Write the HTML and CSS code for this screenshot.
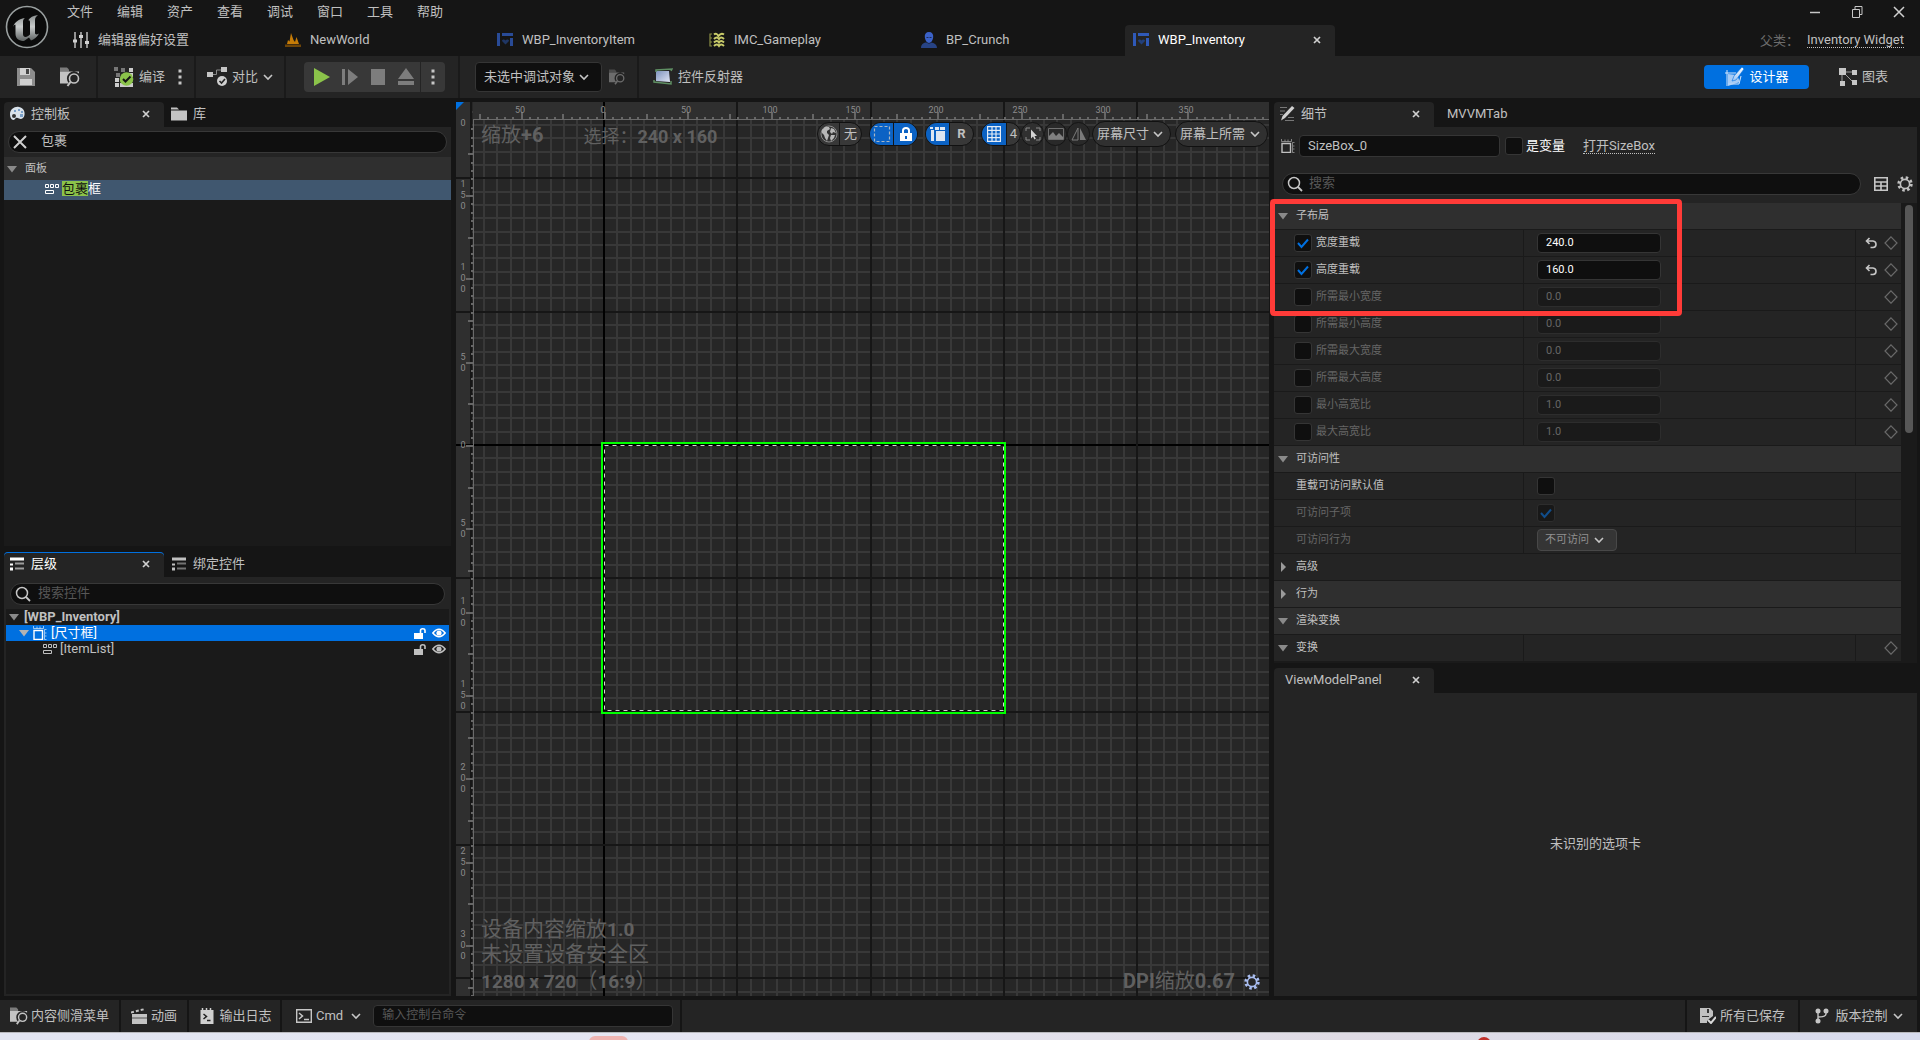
FILE: index.html
```html
<!DOCTYPE html>
<html lang="zh-CN">
<head>
<meta charset="utf-8">
<title>WBP_Inventory</title>
<link rel="stylesheet" href="styles.css">
</head>
<body>
<svg class="defs" aria-hidden="true">
  <defs>
    <linearGradient id="metal" x1="0" y1="0" x2="0" y2="1"><stop offset="0" stop-color="#8b9090"/><stop offset=".45" stop-color="#c9cccc"/><stop offset="1" stop-color="#5c6161"/></linearGradient>
    <linearGradient id="screen" x1="0" y1="0" x2="1" y2="1"><stop offset="0" stop-color="#7f93bd"/><stop offset="1" stop-color="#dfe4f4"/></linearGradient>
    <linearGradient id="pen" x1="0" y1="0" x2="0" y2="1"><stop offset="0" stop-color="#fff"/><stop offset="1" stop-color="#9cc4f4"/></linearGradient>
  </defs>
  <symbol id="logo" viewBox="0 0 44 44"><circle cx="22" cy="22" r="20.5" fill="#0b0b0b" stroke="#9aa0a0" stroke-width="1.6"/><path fill="url(#metal)" d="M8 22c1-4 5-8 12-9-1.500 1-2 2-2 4v12c0 2 1 3 2.500 3s3-1 4.500-2.500V17c0-1.500-1-2-2-1.600 2-2.800 5-4.800 10-5.400-2 1.500-3 3-3 5v13c0 1.500 1.500 2 4 .5-2 3.500-5 6-8 7l-2-3-5 3.500c-5 0-8.500-2.500-8.500-7V20.500c0-1.500-1-1.500-2.500 1.500z"/></symbol>
  <symbol id="i-sliders" viewBox="0 0 16 16"><path stroke="#bdbdbd" stroke-width="1.500" d="M2 0v16M8 0v16M14 0v16"/><path fill="#d0d0d0" d="M0 7.500h4v3H0zM6 3h4v3H6zM12 9h4v3h-4z"/></symbol>
  <symbol id="i-level" viewBox="0 0 16 16"><path fill="#c67c07" d="M2 12l1-4 1.500 1.500L6 1l2.500 7 1.500 2 1.500-5L14 12z"/><path fill="#6e4508" d="M0 12.500h16V15H0z"/></symbol>
  <symbol id="i-widget" viewBox="0 0 16 16"><path fill="#2f59b8" d="M0 1h3v13H0zM5 1h11v3H5zM13 6h3v8h-3z"/><path fill="#223f7a" d="M8.500 12.500L5 9c0-1.800 2.500-2 3.500-.6C9.500 7 12 7.200 12 9z"/></symbol>
  <symbol id="i-input" viewBox="0 0 16 16"><path fill="none" stroke="#8c8f45" stroke-width="1.200" d="M3 2H1v12h2M1 6h2M1 10h2"/><path fill="none" stroke="#c9cc6a" stroke-width="2" d="M5 2.500q2.500-2 4.500 1.500Q12 .5 15 2.500M5 7q3-3 5 0 2-3 5 0M5 10.500q3-3 5 0 2-3 5 0M5 14q3-3 5 0 2-3 5 0"/></symbol>
  <symbol id="i-person" viewBox="0 0 16 16"><path fill="#3b62c8" d="M8 0c3 0 4.500 2 4.200 5C12 8 10 11 8 11S4 8 3.800 5C3.500 2 5 0 8 0z"/><path fill="#274384" d="M0 16c0-4 3-5.500 5.500-5.500Q8 12.500 10.500 10.500 16 11.500 16 16z"/><path fill="#1d2c58" d="M5.500 5h2v1h-2zM8.500 5h2v1h-2z"/></symbol>
  <symbol id="i-close" viewBox="0 0 8 8"><path stroke="#cfcfcf" stroke-width="1.700" d="M1 1l6 6M7 1L1 7"/></symbol>
  <symbol id="i-save" viewBox="0 0 18 18"><path fill="#8d8d8d" d="M0 0h14l4 4v14H0z"/><path fill="#d0d0d0" d="M3 0h10v7H3zM3 11h12v6H3z"/><path fill="#444" d="M9 1h3v5H9z"/></symbol>
  <symbol id="i-browse" viewBox="0 0 20 19"><path fill="#7c7c7c" d="M0 0h7l2 2v2H0z"/><path fill="#c3c3c3" d="M0 4h19v2A7 7 0 0 0 9 16H0z"/><circle cx="14" cy="11" r="4.500" fill="none" stroke="#c3c3c3" stroke-width="1.600"/><path stroke="#c3c3c3" stroke-width="2" d="M10.500 14.500L7.500 18.500"/></symbol>
  <symbol id="i-compile" viewBox="0 0 20 20"><path fill="#777" d="M0 0h4v4H0zM7 1h4v4H7zM2 6h4v4H2z"/><path fill="#ccc" d="M15 1h4v4h-4zM1 11h4v4H1zM1 16h4v4H1zM6 16h13v4H6zM15 6h4v4h-4z"/><circle cx="12.500" cy="12" r="6.800" fill="#8bc34a"/><path fill="none" stroke="#151515" stroke-width="2" d="M9 12l2.500 2.500 5-5"/></symbol>
  <symbol id="i-diff" viewBox="0 0 20 20"><path fill="none" stroke="#8a8a8a" d="M5 7.500h4.500V3H14"/><path fill="#c6c6c6" d="M0 5h6v5H0zM14 0h6v5h-6z"/><circle cx="15" cy="14" r="5" fill="#d0d0d0"/><path fill="none" stroke="#222" stroke-width="1.600" d="M12.500 14l2 2 3.500-4"/></symbol>
  <symbol id="i-chev" viewBox="0 0 10 10"><path fill="none" stroke="#c6c6c6" stroke-width="1.600" d="M1 3l4 4 4-4"/></symbol>
  <symbol id="i-kebab" viewBox="0 0 4 16"><path fill="#c6c6c6" d="M.5.5h3v3h-3zM.5 6.500h3v3h-3zM.5 12.500h3v3h-3z"/></symbol>
  <symbol id="i-play" viewBox="0 0 16 18"><path fill="#8bc34a" d="M0 0l16 9-16 9z"/></symbol>
  <symbol id="i-step" viewBox="0 0 16 18"><path fill="#7d7d7d" d="M0 1h3v16H0zM6 1l10 8-10 8z"/></symbol>
  <symbol id="i-stop" viewBox="0 0 16 18"><path fill="#7d7d7d" d="M1 1h14v16H1z"/></symbol>
  <symbol id="i-eject" viewBox="0 0 16 18"><path fill="#7d7d7d" d="M8 0l8 11H0zM0 13h16v4H0z"/></symbol>
  <symbol id="i-reflect" viewBox="0 0 20 18"><path fill="url(#screen)" d="M3 3h13l1 11-14-1z"/><path fill="none" stroke="#5f8f63" stroke-width="1.500" d="M3 4V2l16-1-1 2M1 12v2l17 2v-3"/></symbol>
  <symbol id="i-design" viewBox="0 0 20 20"><path fill="none" stroke="#d5e6fb" d="M1 6h11M3 3v16M17 9l-2 8H4"/><path fill="#b9d5f7" d="M4 7l9 1 3 7-12 4z" opacity=".9"/><path fill="url(#pen)" stroke="#0070e0" stroke-width=".6" d="M18 0l2 2-8 11-4 1 2-5z"/></symbol>
  <symbol id="i-graph" viewBox="0 0 18 18"><path fill="none" stroke="#9a9a9a" d="M3 4v12M5 4h10M5 5l10 10"/><path fill="#c6c6c6" d="M0 0h7v7H0zM13 2h5v5h-5zM1 13h5v5H1zM13 12h5v5h-5z"/></symbol>
  <symbol id="i-palette" viewBox="0 0 16 16"><path fill="#d9e2ea" d="M1 8C1 3 6 0 10 1c5 1 6 5 5.500 8-.5 4-4 4.500-5.500 3.500-2-1-3-1-4 .5-2 2.500-5 0-5-5z"/><circle cx="5" cy="10" r="2" fill="#333"/><path fill="#7aa0c8" d="M5 4h2v2H5zM9 3h2v2H9zM12 5h2v2h-2zM11 8h3v3h-3z"/></symbol>
  <symbol id="i-folder" viewBox="0 0 16 13"><path fill="#c3c3c3" d="M0 0h6l2 2H0zM0 3h16v10H0z"/></symbol>
  <symbol id="i-x" viewBox="0 0 14 14"><path stroke="#d0d0d0" stroke-width="2" d="M1 1l12 12M13 1L1 13"/></symbol>
  <symbol id="i-search" viewBox="0 0 16 16"><circle cx="7" cy="7" r="5.500" fill="none" stroke="#c6c6c6" stroke-width="1.500"/><path stroke="#c6c6c6" stroke-width="1.800" d="M11 11l4 4"/></symbol>
  <symbol id="i-down" viewBox="0 0 10 10"><path fill="#8a8a8a" d="M0 2h10L5 8.500z"/></symbol>
  <symbol id="i-right" viewBox="0 0 10 10"><path fill="#9a9a9a" d="M3 0l5 5-5 5z"/></symbol>
  <symbol id="i-wrap" viewBox="0 0 14 10"><path fill="none" stroke="currentColor" d="M.5.5h3v3h-3zM5.500.5h3v3h-3zM10.500.5h3v3h-3zM.5 6.500h8v3h-8z"/></symbol>
  <symbol id="i-size" viewBox="0 0 14 14"><path fill="none" stroke="currentColor" stroke-width="1.400" d="M1 4.500h8.500v9H1z"/><path fill="none" stroke="currentColor" opacity=".6" d="M.5 0v2.500h10V0M4 .5v2M7 .5v2M13.500 3.500h-2v10h2M12 7h1.500M12 10h1.500"/></symbol>
  <symbol id="i-list" viewBox="0 0 14 13"><path fill="currentColor" d="M0 0h14v3H0zM0 6h3v2H0zM0 10h3v3H0z"/><path fill="currentColor" opacity=".55" d="M5 5h9v2H5zM5 10h9v2H5z"/></symbol>
  <symbol id="i-unlock" viewBox="0 0 12 11"><path fill="currentColor" d="M0 5h9v6H0z"/><path fill="none" stroke="currentColor" stroke-width="1.600" d="M6.500 5V2.500Q6.500.8 8.700.8T11 2.500V5"/></symbol>
  <symbol id="i-eye" viewBox="0 0 14 10"><path fill="none" stroke="currentColor" stroke-width="1.400" d="M.8 5Q7-2.500 13.200 5 7 12.500.8 5z"/><circle cx="7" cy="5" r="2.600" fill="currentColor"/></symbol>
  <symbol id="i-pencil" viewBox="0 0 16 16"><path stroke="#777" stroke-width="1.200" d="M1 1.500h7M1 5h5M1 8.500h3M9 11.500h6M6 14.500h9"/><path fill="#d0d0d0" d="M13 0l2.500 2L6 12l-4 2.500L3.500 10z"/></symbol>
  <symbol id="i-grid" viewBox="0 0 14 14"><path fill="none" stroke="#c6c6c6" stroke-width="1.600" d="M.8.8h12.400v12.400H.8zM.8 5h12.400M.8 9h12.400M7 5v8"/></symbol>
  <symbol id="i-gear" viewBox="0 0 16 16"><circle cx="8" cy="8" r="6.200" fill="none" stroke="currentColor" stroke-width="3" stroke-dasharray="2.430 2.430"/><circle cx="8" cy="8" r="4.600" fill="none" stroke="currentColor" stroke-width="1.600"/></symbol>
  <symbol id="i-undo" viewBox="0 0 12 12"><path fill="none" stroke="#c6c6c6" stroke-width="1.600" d="M4.500 1L1.500 4l3 3M1.500 4H8q3 .3 3 3.300T8 10.500H5.500"/></symbol>
  <symbol id="i-diamond" viewBox="0 0 14 14"><path fill="none" stroke="#6a6a6a" stroke-width="1.200" d="M7 .8L13 7l-6 6.200L1 7z"/></symbol>
  <symbol id="i-globe" viewBox="0 0 18 18"><circle cx="9" cy="9" r="8" fill="#333" stroke="#8a8a8a"/><path fill="#b8b8b8" d="M2 5l3-3 4 0 1 2-3 2 0 2 2 2-1 3-1 3-2-3-1-3-2-2zM11 3l3 1 2 4-3-1-1 2-2-2zM11 10l4 0-1 3-3 3-1-3z"/></symbol>
  <symbol id="i-dash" viewBox="0 0 18 18"><path fill="none" stroke="#a9b6c4" stroke-width="1.200" stroke-dasharray="3 2" d="M1.500 1.500h15v15h-15z"/></symbol>
  <symbol id="i-lock" viewBox="0 0 12 14"><path fill="#fff" d="M0 6h12v8H0z"/><path fill="none" stroke="#fff" stroke-width="2" d="M3 6V3.500q0-2.500 3-2.500t3 2.500V6"/><path fill="#0b62c4" d="M5 9h2v3H5z"/></symbol>
  <symbol id="i-layout" viewBox="0 0 16 14"><path fill="#dde6f2" d="M0 0h3v2H0zM1 3h3v11H1zM5 0h4v3H5zM10 0h5v3h-5zM6 4h9v10H6z"/></symbol>
  <symbol id="i-table" viewBox="0 0 14 16"><path fill="none" stroke="#e4ecf6" stroke-width="1.200" d="M.6.6h12.800v14.800H.6zM5 .6v15M9 .6v15M.6 4.300h13M.6 8h13M.6 11.700h13"/></symbol>
  <symbol id="i-pick" viewBox="0 0 16 16"><path fill="none" stroke="#8a8a8a" d="M1 5V2h4M11 2h4v3M15 11v3h-4M5 14H1v-3"/><path fill="#d4d4d4" d="M6 3.500v9l2-2 1.500 3 1.300-.7L9.500 10H12z"/></symbol>
  <symbol id="i-image" viewBox="0 0 16 14"><path fill="none" stroke="#6f6f6f" d="M.5 1.500h15v11H.5z"/><path fill="#808080" d="M1 12V9l4-4 3 4 3-3 4 4v2z"/></symbol>
  <symbol id="i-flip" viewBox="0 0 16 14"><path fill="none" stroke="#7a7a7a" d="M7 1v12H1z"/><path fill="#7a7a7a" d="M9 1v12h6z"/></symbol>
  <symbol id="i-clap" viewBox="0 0 16 16"><path fill="#c3c3c3" d="M1 6h15v10H1z"/><path fill="#8a8a8a" d="M1 9h15v2H1z"/><path stroke="#c3c3c3" stroke-width="2" stroke-dasharray="3 2" d="M0 4.500L14 1"/></symbol>
  <symbol id="i-log" viewBox="0 0 13 16"><path fill="#d0d0d0" d="M0 2h13v14H0z"/><path stroke="#d0d0d0" stroke-width="1.500" d="M2 0v3M6 0v3M10 0v3"/><path fill="none" stroke="#222" stroke-width="1.500" d="M3 6l3 2.500L3 11M6.500 12.500H10"/></symbol>
  <symbol id="i-cmd" viewBox="0 0 16 14"><path fill="none" stroke="#c6c6c6" stroke-width="1.400" d="M.7.7h14.600v12.600H.7z"/><path fill="none" stroke="#c6c6c6" stroke-width="1.500" d="M3 4l3.500 3L3 10M8 10.500h5"/></symbol>
  <symbol id="i-saved" viewBox="0 0 16 16"><path fill="#c0c0c0" d="M0 0h10l3 3v5L9 11l-2 2v2H0z"/><path fill="#333" d="M7 1h2v4H7zM2 8h7v1H2z"/><path fill="none" stroke="#d8d8d8" stroke-width="2" d="M8 12l3 3 5-6"/></symbol>
  <symbol id="i-branch" viewBox="0 0 14 16"><circle cx="3" cy="3" r="2.500" fill="#c6c6c6"/><circle cx="11" cy="3" r="2.500" fill="#c6c6c6"/><circle cx="3" cy="13" r="2.500" fill="#c6c6c6"/><path fill="none" stroke="#c6c6c6" stroke-width="1.400" d="M3 3v10M11 3v3q0 3-8 3"/></symbol>
</svg>

<div class="app">
  <header class="titlebar">
    <svg class="logo"><use href="#logo"/></svg>
    <div class="title-rows">
      <div class="menu-row">
        <nav class="menu"><button>文件</button><button>编辑</button><button>资产</button><button>查看</button><button>调试</button><button>窗口</button><button>工具</button><button>帮助</button></nav>
        <div class="window-controls">
          <button aria-label="最小化"><svg class="s12" viewBox="0 0 12 12"><path stroke="#c6c6c6" stroke-width="1.500" d="M1 6.500h10"/></svg></button>
          <button aria-label="还原"><svg class="s12" viewBox="0 0 12 12"><path fill="none" stroke="#c6c6c6" d="M1.500 3.500h7v8h-7zM4 3V.5h7v8H9"/></svg></button>
          <button aria-label="关闭"><svg class="s12" viewBox="0 0 12 12"><path stroke="#d0d0d0" stroke-width="1.500" d="M1 1l10 10M11 1L1 11"/></svg></button>
        </div>
      </div>
      <div class="doc-row">
        <div class="doc-tabs">
          <button class="doc-tab"><svg class="s16"><use href="#i-sliders"/></svg>编辑器偏好设置</button>
          <button class="doc-tab"><svg class="s16"><use href="#i-level"/></svg>NewWorld</button>
          <button class="doc-tab dim-icon"><svg class="s16"><use href="#i-widget"/></svg>WBP_InventoryItem</button>
          <button class="doc-tab"><svg class="s16"><use href="#i-input"/></svg>IMC_Gameplay</button>
          <button class="doc-tab"><svg class="s16"><use href="#i-person"/></svg>BP_Crunch</button>
          <button class="doc-tab active"><svg class="s16"><use href="#i-widget"/></svg>WBP_Inventory<svg class="tab-close"><use href="#i-close"/></svg></button>
        </div>
        <div class="parent-class"><span>父类<span class="mid-punct">：</span></span><a href="#">Inventory Widget</a></div>
      </div>
    </div>
  </header>

  <div class="toolbar">
    <div class="tb-group tb-file"><button aria-label="保存"><svg class="s18"><use href="#i-save"/></svg></button><button aria-label="浏览"><svg class="s20"><use href="#i-browse"/></svg></button></div>
    <div class="tb-group tb-compile"><button class="tb-text"><svg class="s20"><use href="#i-compile"/></svg>编译</button><button aria-label="编译选项"><svg class="kebab"><use href="#i-kebab"/></svg></button></div>
    <div class="tb-group tb-diff"><button class="tb-text"><svg class="s20"><use href="#i-diff"/></svg>对比<svg class="s10"><use href="#i-chev"/></svg></button></div>
    <div class="tb-group tb-play">
      <div class="play"><button aria-label="播放"><svg class="s18"><use href="#i-play"/></svg></button><button aria-label="步进"><svg class="s18"><use href="#i-step"/></svg></button><button aria-label="停止"><svg class="s18"><use href="#i-stop"/></svg></button><button aria-label="弹出"><svg class="s18"><use href="#i-eject"/></svg></button><button class="play-more" aria-label="播放选项"><svg class="kebab"><use href="#i-kebab"/></svg></button></div>
    </div>
    <div class="tb-group tb-debug"><span class="select debug-select"><select aria-label="调试对象"><option>未选中调试对象</option></select><svg class="s10"><use href="#i-chev"/></svg></span><button class="faded" aria-label="浏览调试对象"><svg class="s16"><use href="#i-browse"/></svg></button></div>
    <button class="tb-text tb-reflect"><svg class="s20"><use href="#i-reflect"/></svg>控件反射器</button>
    <div class="modes"><button class="mode active"><svg class="s20"><use href="#i-design"/></svg>设计器</button><button class="mode"><svg class="s18"><use href="#i-graph"/></svg>图表</button></div>
  </div>

  <main class="workspace">
    <div class="left-col">
      <section class="panel palette">
        <div class="tabs"><button class="tab active"><svg class="s16"><use href="#i-palette"/></svg>控制板<svg class="tab-close"><use href="#i-close"/></svg></button><button class="tab"><svg class="s16"><use href="#i-folder"/></svg>库</button></div>
        <div class="panel-body">
          <label class="search"><svg class="s14"><use href="#i-x"/></svg><input type="text" value="包裹" aria-label="搜索控制板"></label>
          <div class="category"><svg class="s10"><use href="#i-down"/></svg>面板</div>
          <div class="palette-item"><svg class="wrap-icon"><use href="#i-wrap"/></svg><span><mark>包裹</mark>框</span></div>
          <div class="list-space"></div>
        </div>
      </section>
      <section class="panel hierarchy">
        <div class="tabs"><button class="tab active focused"><svg class="s14"><use href="#i-list"/></svg>层级<svg class="tab-close"><use href="#i-close"/></svg></button><button class="tab"><svg class="s14"><use href="#i-list"/></svg>绑定控件</button></div>
        <div class="panel-body">
          <label class="search"><svg class="s16"><use href="#i-search"/></svg><input type="text" placeholder="搜索控件" aria-label="搜索控件"></label>
          <div class="tree">
            <div class="tree-row root"><svg class="s10"><use href="#i-down"/></svg>[WBP_Inventory]</div>
            <div class="tree-row level1 selected"><svg class="s10 pale"><use href="#i-down"/></svg><svg class="s14"><use href="#i-size"/></svg>[尺寸框]<span class="row-tools"><svg class="unlock"><use href="#i-unlock"/></svg><svg class="eye"><use href="#i-eye"/></svg></span></div>
            <div class="tree-row level2"><svg class="wrap-icon"><use href="#i-wrap"/></svg>[ItemList]<span class="row-tools"><svg class="unlock"><use href="#i-unlock"/></svg><svg class="eye"><use href="#i-eye"/></svg></span></div>
          </div>
        </div>
      </section>
    </div>

    <section class="designer" id="designer">
      <svg class="surface" id="surface"></svg>
      <div class="hud hud-top"><span>缩放<b>+6</b></span><span class="hud-size">选择<span class="mid-punct">：</span><b>240 x 160</b></span></div>
      <div class="view-tools">
        <div class="pill globe"><button aria-label="本地化"><svg class="s18"><use href="#i-globe"/></svg></button><button>无</button></div>
        <div class="pill locks"><button class="on" aria-label="轮廓"><svg class="s18"><use href="#i-dash"/></svg></button><button class="on" aria-label="锁定"><svg class="s14"><use href="#i-lock"/></svg></button></div>
        <div class="pill flow"><button class="on" aria-label="布局"><svg class="s16"><use href="#i-layout"/></svg></button><button class="bold">R</button></div>
        <div class="pill snap"><button class="on" aria-label="网格"><svg class="s16"><use href="#i-table"/></svg></button><button>4</button></div>
        <button class="round" aria-label="选取"><svg class="s16"><use href="#i-pick"/></svg></button>
        <button class="round off" aria-label="图像"><svg class="s16"><use href="#i-image"/></svg></button>
        <button class="round off" aria-label="翻转"><svg class="s16"><use href="#i-flip"/></svg></button>
        <span class="select pill-select"><select aria-label="屏幕尺寸"><option>屏幕尺寸</option></select><svg class="s10"><use href="#i-chev"/></svg></span>
        <span class="select pill-select wide"><select aria-label="填充"><option>屏幕上所需</option></select><svg class="s10"><use href="#i-chev"/></svg></span>
      </div>
      <div class="hud hud-bottom"><span>设备内容缩放<b>1.0</b></span><span>未设置设备安全区</span><span><b>1280 x 720</b><span class="mid-punct">（</span><b>16:9</b><span class="mid-punct">）</span></span></div>
      <div class="hud hud-dpi"><span><b class="light">DPI</b>缩放<b>0.67</b></span><button aria-label="DPI 设置"><svg class="s16"><use href="#i-gear"/></svg></button></div>
    </section>

    <div class="right-col">
      <section class="panel details">
        <div class="tabs"><button class="tab active"><svg class="s16"><use href="#i-pencil"/></svg>细节<svg class="tab-close"><use href="#i-close"/></svg></button><button class="tab">MVVMTab</button></div>
        <div class="panel-body">
          <div class="name-row"><svg class="s14"><use href="#i-size"/></svg><input class="field name-field" type="text" value="SizeBox_0" aria-label="名称"><label class="is-var"><input type="checkbox">是变量</label><a href="#">打开SizeBox</a></div>
          <div class="search-row"><label class="search"><svg class="s16"><use href="#i-search"/></svg><input type="text" placeholder="搜索" aria-label="搜索"></label><button aria-label="属性矩阵"><svg class="s14"><use href="#i-grid"/></svg></button><button aria-label="设置"><svg class="s16"><use href="#i-gear"/></svg></button></div>
          <div class="props-wrap">
            <div class="props">
              <div class="head"><svg class="s10"><use href="#i-down"/></svg>子布局</div>
              <div class="prop"><label class="cell"><input type="checkbox" checked>宽度重载</label><div class="cell val"><input class="field" type="text" value="240.0" aria-label="宽度重载"></div><div class="cell acts"><svg class="s12"><use href="#i-undo"/></svg><svg class="s14"><use href="#i-diamond"/></svg></div></div>
              <div class="prop"><label class="cell"><input type="checkbox" checked>高度重载</label><div class="cell val"><input class="field" type="text" value="160.0" aria-label="高度重载"></div><div class="cell acts"><svg class="s12"><use href="#i-undo"/></svg><svg class="s14"><use href="#i-diamond"/></svg></div></div>
              <div class="prop off"><label class="cell"><input type="checkbox">所需最小宽度</label><div class="cell val"><input class="field" type="text" value="0.0" disabled aria-label="所需最小宽度"></div><div class="cell acts"><svg class="s14"><use href="#i-diamond"/></svg></div></div>
              <div class="prop off"><label class="cell"><input type="checkbox">所需最小高度</label><div class="cell val"><input class="field" type="text" value="0.0" disabled aria-label="所需最小高度"></div><div class="cell acts"><svg class="s14"><use href="#i-diamond"/></svg></div></div>
              <div class="prop off"><label class="cell"><input type="checkbox">所需最大宽度</label><div class="cell val"><input class="field" type="text" value="0.0" disabled aria-label="所需最大宽度"></div><div class="cell acts"><svg class="s14"><use href="#i-diamond"/></svg></div></div>
              <div class="prop off"><label class="cell"><input type="checkbox">所需最大高度</label><div class="cell val"><input class="field" type="text" value="0.0" disabled aria-label="所需最大高度"></div><div class="cell acts"><svg class="s14"><use href="#i-diamond"/></svg></div></div>
              <div class="prop off"><label class="cell"><input type="checkbox">最小高宽比</label><div class="cell val"><input class="field" type="text" value="1.0" disabled aria-label="最小高宽比"></div><div class="cell acts"><svg class="s14"><use href="#i-diamond"/></svg></div></div>
              <div class="prop off"><label class="cell"><input type="checkbox">最大高宽比</label><div class="cell val"><input class="field" type="text" value="1.0" disabled aria-label="最大高宽比"></div><div class="cell acts"><svg class="s14"><use href="#i-diamond"/></svg></div></div>
              <div class="head"><svg class="s10"><use href="#i-down"/></svg>可访问性</div>
              <div class="prop"><label class="cell plain" for="acc-override">重载可访问默认值</label><div class="cell val"><input id="acc-override" type="checkbox"></div><div class="cell acts"></div></div>
              <div class="prop off"><label class="cell plain" for="acc-children">可访问子项</label><div class="cell val"><input id="acc-children" type="checkbox" checked disabled></div><div class="cell acts"></div></div>
              <div class="prop off"><label class="cell plain" for="acc-behavior">可访问行为</label><div class="cell val"><span class="select small-select"><select id="acc-behavior" disabled><option>不可访问</option></select><svg class="s10"><use href="#i-chev"/></svg></span></div><div class="cell acts"></div></div>
              <div class="head sub"><svg class="s10"><use href="#i-right"/></svg>高级</div>
              <div class="head"><svg class="s10"><use href="#i-right"/></svg>行为</div>
              <div class="head"><svg class="s10"><use href="#i-down"/></svg>渲染变换</div>
              <div class="prop"><div class="cell group"><svg class="s10"><use href="#i-down"/></svg>变换</div><div class="cell val"></div><div class="cell acts"><svg class="s14"><use href="#i-diamond"/></svg></div></div>
            </div>
            <div class="scrollbar"><div class="thumb"></div></div>
          </div>
        </div>
        <div class="callout"></div>
      </section>
      <section class="panel viewmodel">
        <div class="tabs"><button class="tab active text-only">ViewModelPanel<svg class="tab-close"><use href="#i-close"/></svg></button></div>
        <div class="panel-body empty">未识别的选项卡</div>
      </section>
    </div>
  </main>

  <footer class="status">
    <button class="st drawer"><svg class="s18"><use href="#i-browse"/></svg>内容侧滑菜单</button>
    <button class="st anim"><svg class="s16"><use href="#i-clap"/></svg>动画</button>
    <button class="st log"><svg class="s16"><use href="#i-log"/></svg>输出日志</button>
    <div class="st console"><button class="cmd"><svg class="s16"><use href="#i-cmd"/></svg>Cmd<svg class="s10"><use href="#i-chev"/></svg></button><input class="field" type="text" placeholder="输入控制台命令" aria-label="控制台命令"></div>
    <div class="st filler"></div>
    <button class="st saved"><svg class="s16"><use href="#i-saved"/></svg>所有已保存</button>
    <button class="st source"><svg class="s16"><use href="#i-branch"/></svg>版本控制<svg class="s10"><use href="#i-chev"/></svg></button>
  </footer>
  <div class="desktop"><div class="desk-pink"></div><div class="desk-dot"></div></div>
</div>
<script src="designer.js"></script>
</body>
</html>
```
FILE: styles.css
```css
* { box-sizing: border-box; }
body {
  margin: 0;
  background: #151515;
  color: #c0c0c0;
  font: 13px/16px Roboto, "Noto Sans CJK SC", sans-serif;
}
button, input, select { font: inherit; color: inherit; }
button { background: none; border: 0; padding: 0; display: flex; align-items: center; justify-content: center; white-space: nowrap; }
a { color: inherit; text-decoration: none; border-bottom: 1px dotted #c0c0c0; line-height: 15px; }
svg { flex: none; display: block; }
.defs { position: absolute; width: 0; height: 0; }
.s10 { width: 10px; height: 10px; }
.s12 { width: 12px; height: 12px; }
.s14 { width: 14px; height: 14px; }
.s16 { width: 16px; height: 16px; }
.s18 { width: 18px; height: 18px; }
.s20 { width: 20px; height: 20px; }
.kebab { width: 4px; height: 16px; }
/* full-width punctuation centred in its square */
.mid-punct { font-family: "Noto Sans CJK TC", sans-serif; }

.app { display: flex; flex-direction: column; min-height: 100vh; }

/* title bar */
.titlebar { display: flex; height: 56px; }
.logo { width: 44px; height: 44px; margin: 5px 6px 0 5px; }
.title-rows { flex: 1; }
.menu-row { display: flex; justify-content: space-between; height: 25px; }
.menu { display: flex; }
.menu button { padding: 0 12px; height: 23px; }
.window-controls { display: flex; gap: 30px; height: 24px; padding-right: 15px; }
.doc-row { display: flex; justify-content: space-between; height: 31px; padding-left: 10px; }
.doc-tabs { display: flex; gap: 2px; }
.doc-tab { width: 210px; padding: 0 14px 1px 8px; gap: 9px; justify-content: flex-start; border-radius: 4px 4px 0 0; }
.doc-tab.active { background: #242424; color: #fff; }
.doc-tab.dim-icon svg { opacity: .8; }
.tab-close { width: 8px; height: 8px; margin-left: auto; }
.parent-class { display: flex; align-items: center; gap: 8px; padding: 0 16px 1px 0; }
.parent-class span { color: #6c6c6c; }

/* main toolbar */
.toolbar { display: flex; height: 42px; background: #242424; }
.tb-group { display: flex; align-items: center; border-right: 2px solid #1a1a1a; }
.tb-text { gap: 5px; }
.tb-file { gap: 25px; padding: 0 16px 0 17px; }
.tb-compile { gap: 13px; padding: 0 12px 0 16px; }
.tb-diff { padding: 0 11px; }
.tb-play { padding: 0 13px 0 18px; }
.play { display: flex; padding-left: 4px; height: 30px; background: #383838; border-radius: 4px; }
.play button { width: 28px; }
.play .play-more { width: 25px; border-left: 1px solid #242424; }
.tb-debug { gap: 7px; padding: 0 12px 0 15px; }
.faded { opacity: .45; }
.tb-reflect { margin-left: 14px; }
.select { position: relative; display: inline-flex; align-items: center; }
.select select { appearance: none; width: 100%; height: 100%; border: 0; background: none; outline: none; opacity: 1; }
.select svg { position: absolute; right: 12px; pointer-events: none; }
.debug-select { width: 127px; height: 30px; background: #0f0f0f; border: 1px solid #353535; border-radius: 4px; }
.debug-select select { padding: 0 0 0 8px; }
.modes { display: flex; align-items: center; gap: 30px; margin-left: auto; padding-right: 32px; }
.mode { gap: 5px; height: 24px; }
.mode.active { width: 105px; background: #0070e0; color: #fff; border-radius: 4px; }

/* three columns */
.workspace { flex: 1; display: grid; grid-template-columns: 447fr 813fr 643fr; gap: 5px; padding: 4px 3px 4px 4px; }
.left-col, .right-col { display: flex; flex-direction: column; min-width: 0; }
.left-col { gap: 6px; }
.right-col { gap: 5px; }
.panel { display: flex; flex-direction: column; position: relative; }
.palette, .hierarchy { flex: 1; }
.viewmodel { flex: 1; }
.tabs { display: flex; height: 25px; }
.tab { gap: 6px; padding: 0 7px 2px; justify-content: flex-start; }
.tab.active { width: 160px; padding: 0 14px 2px 5px; background: #242424; border-radius: 4px 4px 0 0; }
.tab.active.text-only { padding-left: 11px; }
.tab.focused { color: #fff; box-shadow: inset 0 1px #0070e0; }
.details .tab + .tab { padding-left: 13px; }
.hierarchy .tab { gap: 7px; padding-left: 8px; }
.hierarchy .tab.active { padding-left: 6px; }
.panel-body { flex: 1; display: flex; flex-direction: column; background: #242424; }
.search { display: flex; align-items: center; height: 22px; padding: 0 8px 0 4px; background: #0f0f0f; border: 1px solid #383838; border-radius: 11px; }
.search input { flex: 1; min-width: 0; border: 0; padding: 0 0 2px; margin-left: 6px; background: none; outline: none; }
input::placeholder { color: #575757; opacity: 1; }
.palette .search { margin: 4px 4px; }
.palette .search input { margin-left: 14px; }
.category { display: flex; align-items: center; gap: 8px; height: 23px; padding-left: 3px; background: #2f2f2f; font-size: 11px; }
.palette-item { display: flex; align-items: center; gap: 3px; height: 20px; padding: 0 0 2px 41px; background: #40576f; color: #fff; }
.palette-item mark { background: #8bc34a; color: #0f0f0f; }
.wrap-icon { width: 14px; height: 10px; }
.list-space { flex: 1; background: #1a1a1a; }
.hierarchy .search { margin: 6px 6px 4px; }
.hierarchy .search input { margin-left: 7px; }
.tree { flex: 1; margin: 0 2px 2px; background: #1a1a1a; }
.tree-row { display: flex; align-items: center; height: 16px; padding-right: 3px; }
.tree-row.root { gap: 5px; padding-left: 3px; font-weight: 700; }
.tree-row.level1 { gap: 4px; padding-left: 13px; }
.tree-row.level2 { gap: 3px; padding-left: 37px; }
.tree-row.selected { background: #0070e0; color: #fff; }
.pale { filter: brightness(1.3); }
.row-tools { display: flex; align-items: center; gap: 6px; margin-left: auto; }
.unlock { width: 12px; height: 11px; }
.eye { width: 14px; height: 10px; }

/* designer canvas */
.designer { position: relative; overflow: hidden; background: #262626; }
.surface { position: absolute; inset: 0; width: 100%; height: 100%; }
.surface .label { fill: #8c8c8c; font-size: 9px; text-anchor: middle; }
.hud { position: absolute; color: #606060; font-size: 20px; line-height: 25px; }
.hud-top { top: 21px; left: 25px; display: flex; gap: 40px; }
.hud-size { font-size: 18px; }
.hud-bottom { left: 25px; bottom: 2px; display: flex; flex-direction: column; font-size: 21px; }
.hud-bottom b { font-size: 19px; }
.hud-dpi { right: 9px; bottom: 2px; display: flex; align-items: center; gap: 9px; }
.hud-dpi button { color: #a9bdf0; }
.view-tools { position: absolute; top: 20px; right: 1px; display: flex; align-items: center; height: 24px; }
.pill { display: flex; height: 24px; border: 1px solid #111; border-radius: 12px; background: #383838; overflow: hidden; }
.pill button { flex: 1; }
.pill button + button { border-left: 1px solid #151515; }
.pill .on { background: #0b62c4; }
.pill .bold { font-weight: 700; }
.globe { width: 45px; margin-right: 7px; }
.locks { width: 49px; margin-right: 7px; }
.flow { width: 49px; margin-right: 7px; }
.snap { width: 40px; }
.snap .on { flex: none; width: 24px; }
.round { width: 23px; height: 24px; border: 1px solid #151515; border-radius: 12px; background: #303030; }
.round.off { background: #292929; }
.pill-select { width: 79px; height: 26px; margin-left: 2px; background: #303030; border: 1px solid #111; border-radius: 13px; }
.pill-select.wide { width: 93px; margin-left: 4px; }
.pill-select select { padding: 0 0 0 4px; }
.pill-select svg { right: 7px; }

/* details */
.field { height: 20px; padding: 0 8px 1px; background: #0f0f0f; border: 1px solid #353535; border-radius: 4px; outline: none; }
input[type="checkbox"] { appearance: none; flex: none; width: 18px; height: 18px; margin: 0; background: #0f0f0f center / 12px 12px no-repeat; border: 1px solid #353535; border-radius: 3px; }
input[type="checkbox"]:checked { background-image: url("data:image/svg+xml,%3Csvg xmlns='http://www.w3.org/2000/svg' viewBox='0 0 12 12'%3E%3Cpath d='M1 6l3.500 4L11 2.500' fill='none' stroke='%230070e0' stroke-width='2'/%3E%3C/svg%3E"); }
input[type="checkbox"]:disabled { opacity: .55; }
.name-row { display: flex; align-items: center; padding: 8px 7px 0; }
.name-field { width: 201px; height: 22px; margin: 0 5px 0 4px; padding-bottom: 2px; }
.is-var { display: flex; align-items: center; gap: 3px; margin-right: 18px; color: #fff; }
.search-row { display: flex; align-items: center; padding: 16px 4px 8px 8px; }
.search-row .search { flex: 1; margin-right: 13px; }
.search-row button + button { margin-left: 9px; }
.props-wrap { display: flex; background: #1a1a1a; padding-bottom: 1px; }
.props { flex: 1; font-size: 11px; }
.scrollbar { width: 16px; padding: 2px 4px; }
.thumb { height: 228px; background: #575757; border-radius: 4px; }
.head { display: flex; align-items: center; gap: 8px; height: 27px; padding: 0 0 1px 4px; background: #2f2f2f; border-bottom: 1px solid #1a1a1a; }
.head.sub { background: #242424; }
.prop { display: grid; grid-template-columns: 250fr 332fr 45px; height: 27px; background: #242424; border-bottom: 1px solid #1a1a1a; }
.cell { display: flex; align-items: center; gap: 4px; padding-left: 20px; border-right: 1px solid #1a1a1a; }
.cell.plain { padding: 0 0 1px 22px; }
.cell.group { gap: 8px; padding: 0 0 1px 4px; }
.cell.val { padding-left: 13px; color: #fff; }
.cell.val .field { width: 124px; padding: 0 8px 2px; }
.cell.acts { justify-content: flex-end; gap: 7px; padding-right: 3px; border-right: 0; }
.prop.off, .prop.off .val { color: #666; }
.prop.off .field { background: #1a1a1a; border-color: #2d2d2d; }
.small-select { width: 80px; height: 22px; color: #909090; background: #353535; border: 1px solid #484848; border-radius: 4px; }
.cell.val .small-select { color: #909090; }
.small-select select { padding: 0 0 1px 7px; }
.callout { position: absolute; top: 97px; left: -4px; width: 412px; height: 117px; border: 5px solid #ff3b38; border-radius: 4px; }
.empty { align-items: center; justify-content: center; padding-bottom: 2px; }

/* status bar */
.status { display: flex; height: 32px; gap: 2px; padding-right: 3px; }
.st { display: flex; align-items: center; gap: 4px; background: #242424; }
.drawer { width: 119px; gap: 3px; justify-content: flex-start; padding-left: 10px; }
.anim { width: 66px; }
.log { width: 91px; padding-left: 2px; }
.console { width: 398px; padding-left: 14px; gap: 12px; }
.console .field { width: 300px; height: 22px; padding-bottom: 2px; font-size: 12px; }
.cmd { gap: 4px; }
.cmd .s10 { margin-left: 4px; }
.filler { flex: 1; }
.saved { width: 111px; }
.source { width: 117px; gap: 5px; }

/* strip of the desktop behind the window */
.desktop { position: relative; height: 8px; overflow: hidden; border-top: 1px solid #b9b9bd; background: linear-gradient(90deg, #e2e5f1, #e6e6f2 40%, #dfdbe4 70%, #d8dcee); }
.desk-pink { position: absolute; left: 589px; top: 3px; width: 39px; height: 12px; border-radius: 6px; background: #efb5b2; }
.desk-dot { position: absolute; left: 1477px; top: 4px; width: 14px; height: 14px; border-radius: 7px; background: #c0302a; }
```
FILE: designer.js
```js
const surface = document.getElementById('surface');
const NS = 'http://www.w3.org/2000/svg';
const ORIGIN_X = 148;
const ORIGIN_Y = 343;
const CELL = 40 / 3;   // grid square in pixels
const UNIT = 5 / 3;    // pixels for one ruler unit
const RULER = 17;

function rect(x, y, w, h, fill) {
  const r = document.createElementNS(NS, 'rect');
  r.setAttribute('x', x);
  r.setAttribute('y', y);
  r.setAttribute('width', w);
  r.setAttribute('height', h);
  r.setAttribute('fill', fill);
  surface.appendChild(r);
}

function label(x, y, text) {
  const t = document.createElementNS(NS, 'text');
  t.setAttribute('x', x);
  t.setAttribute('y', y);
  t.setAttribute('class', 'label');
  t.textContent = text;
  surface.appendChild(t);
}

function frame(x, y, w, h, stroke, width, dash) {
  const r = document.createElementNS(NS, 'rect');
  r.setAttribute('x', x);
  r.setAttribute('y', y);
  r.setAttribute('width', w);
  r.setAttribute('height', h);
  r.setAttribute('fill', 'none');
  r.setAttribute('stroke', stroke);
  r.setAttribute('stroke-width', width);
  if (dash) r.setAttribute('stroke-dasharray', dash);
  surface.appendChild(r);
}

function gridLines(w, h, major) {
  const color = n => n === 0 ? '#000' : major ? '#161616' : '#383838';
  for (let n = -40; n < 100; n++) {
    if ((n % 10 === 0) !== major) continue;
    const x = Math.round(ORIGIN_X + n * CELL) - 1;
    const y = Math.round(ORIGIN_Y + n * CELL) - 1;
    if (x >= 0 && x < w) rect(x, 0, 2, h, color(n));
    if (y >= 0 && y < h) rect(0, y, w, 2, color(n));
  }
}

function draw() {
  const { width: w, height: h } = surface.getBoundingClientRect();
  surface.replaceChildren();
  gridLines(w, h, false);
  rect(RULER, 0, w, RULER, '#2f2f2f');
  rect(0, 0, RULER - 2, h, '#2f2f2f');
  gridLines(w, h, true);
  rect(RULER + 1, RULER, w, 1, '#6a6a6a');
  rect(RULER, RULER, 1, h, '#6a6a6a');
  for (let u = -200; u <= 700; u += 5) {
    const x = Math.round(ORIGIN_X + u * UNIT);
    const y = Math.round(ORIGIN_Y + u * UNIT);
    const size = u % 50 === 0 ? 7 : u % 25 === 0 ? 5 : 2;
    if (x > RULER + 2 && x < w) rect(x, RULER - size, 2, size, '#666');
    if (y > RULER + 2 && y < h) rect(RULER - size, y, size, 2, '#666');
    if (u % 50 !== 0) continue;
    const digits = String(Math.abs(u));
    if (x > RULER + 2 && x < w - 10) label(x - 1, 11, digits);
    [...digits].forEach((d, i) => {
      const dy = y + 3 + Math.round((i - (digits.length - 1) / 2) * 11);
      if (dy > RULER + 2 && dy < h - 2) label(7, dy, d);
    });
  }
  const corner = document.createElementNS(NS, 'path');
  corner.setAttribute('d', 'M0 0h8L0 8z');
  corner.setAttribute('fill', '#0070e0');
  surface.appendChild(corner);
  frame(ORIGIN_X + .5, ORIGIN_Y + .5, 399, 265, '#000', 1);
  frame(ORIGIN_X + .5, ORIGIN_Y + .5, 399, 265, '#d8d8d8', 1, '4 4');
  frame(ORIGIN_X - 2, ORIGIN_Y - 2, 403, 270, '#0f0', 2);
}

draw();
addEventListener('resize', draw);
```
